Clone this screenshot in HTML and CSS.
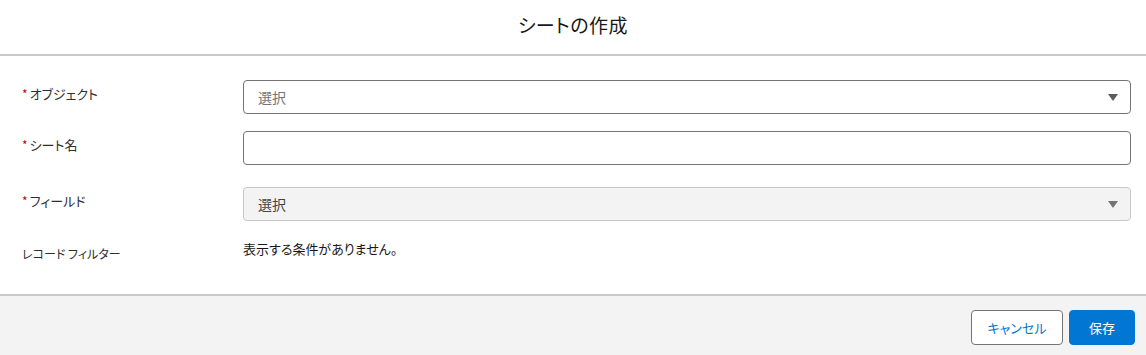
FILE: index.html
```html
<!DOCTYPE html>
<html lang="ja">

<head>
    <meta charset="UTF-8">
    <meta name="viewport" content="width=device-width, initial-scale=1.0">
    <title>シートの作成</title>
    <link rel="stylesheet" href="styles.css">
</head>

<body>
    <div class="modal-wrap">
        <header class="modal-header">
            <h2 class="modal-title">シートの作成</h2>
        </header>

        <section class="modal-body">
            <div class="form-row">
                <label class="form-label"><abbr class="required">*</abbr>オブジェクト</label>
                <div class="combo">
                    <span class="combo-text placeholder">選択</span>
                    <span class="combo-arrow"></span>
                </div>
            </div>

            <div class="form-row">
                <label class="form-label"><abbr class="required">*</abbr>シート名</label>
                <input type="text" class="text-input">
            </div>

            <div class="form-row">
                <label class="form-label"><abbr class="required">*</abbr>フィールド</label>
                <div class="combo disabled">
                    <span class="combo-text">選択</span>
                    <span class="combo-arrow"></span>
                </div>
            </div>

            <div class="form-row filter-row">
                <label class="form-label">レコード フィルター</label>
                <p class="empty-text">表示する条件がありません。</p>
            </div>
        </section>

        <footer class="modal-footer">
            <button class="btn btn-neutral">キャンセル</button>
            <button class="btn btn-brand">保存</button>
        </footer>
    </div>
</body>

</html>
```

FILE: styles.css
```css
html,
body {
    padding: 0;
    margin: 0;

    height: 100%;
    width: 100%;
}

body {
    font-family: "Noto Sans CJK JP", "Noto Sans", sans-serif;
    font-feature-settings: "palt";
    color: #181818;
    background: #fff;
}

.modal-wrap {
    display: flex;
    flex-direction: column;
    height: 100%;
}

.modal-header {
    height: 54px;
    border-bottom: 2px solid #c9c9c9;

    display: flex;
    align-items: center;
    justify-content: center;
}

.modal-title {
    margin: 0;
    margin-top: -6px;
    font-size: 19px;
    font-weight: 400;
    letter-spacing: 0.5px;
}

.modal-body {
    flex: 1;
    padding: 24px 15px 0 22px;
}

.form-row {
    display: flex;
    align-items: flex-start;
    margin-bottom: 17px;
}

.form-row:nth-child(2) {
    margin-bottom: 22px;
}

.form-label {
    width: 221px;
    flex: 0 0 221px;
    padding-top: 5px;

    font-size: 13px;
    line-height: 18px;
    color: #2e2e2e;
}

.required {
    color: #ba0517;
    text-decoration: none;
    margin-right: 2px;
    font-size: 12px;
}

.combo,
.text-input {
    flex: 1;
    box-sizing: border-box;
    height: 34px;

    border: 1px solid #747474;
    border-radius: 4px;
    background: #fff;
}

.text-input {
    margin: 0;
    padding: 0 14px;
    font: inherit;
}

.combo {
    display: flex;
    align-items: center;
    justify-content: space-between;
    padding: 0 12px 0 14px;
}

.combo-text {
    font-size: 14px;
    color: #444;
}

.combo-text.placeholder {
    color: #747474;
}

.combo-arrow {
    width: 0;
    height: 0;
    border-left: 5px solid transparent;
    border-right: 5px solid transparent;
    border-top: 7px solid #5c5c5c;
}

.combo.disabled {
    background: #f3f3f3;
    border-color: #c9c9c9;
}

.combo.disabled .combo-arrow {
    border-top-color: #747474;
}

.filter-row {
    margin-top: 19px;
    margin-bottom: 0;
}

.filter-row .form-label {
    padding-top: 5px;
    font-size: 12px;
}

.empty-text {
    margin: 0;
    font-size: 13px;
    line-height: 18px;
}

.modal-footer {
    flex: 0 0 61px;
    box-sizing: border-box;
    border-top: 2px solid #c9c9c9;
    background: #f3f3f3;

    display: flex;
    align-items: flex-start;
    justify-content: flex-end;
    gap: 6px;
    padding: 14px 11px 0 0;
}

.btn {
    height: 35px;
    border-radius: 4px;
    padding: 0;
    white-space: nowrap;

    font-family: inherit;
    font-feature-settings: "palt";
    font-size: 13px;
}

.btn-neutral {
    width: 92px;
    background: #fff;
    color: #0176d3;
    border: 1px solid #747474;
}

.btn-brand {
    width: 66px;
    background: #0176d3;
    color: #fff;
    border: 1px solid #0176d3;
}
```
